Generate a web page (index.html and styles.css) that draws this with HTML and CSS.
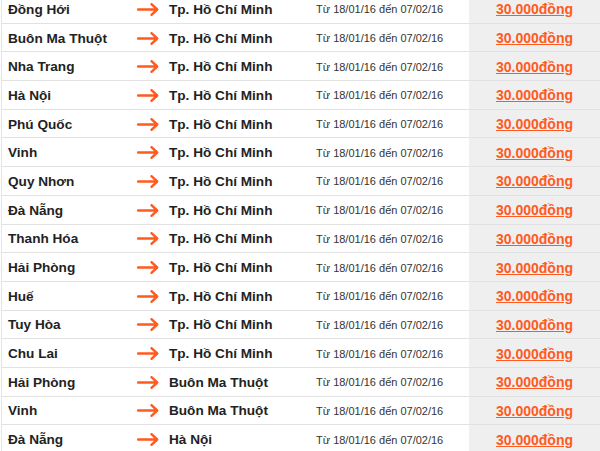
FILE: index.html
```html
<!DOCTYPE html>
<html lang="vi">
<head>
<meta charset="utf-8">
<link rel="stylesheet" href="styles.css">
</head>
<body>
<div class="list">
  <div class="row"><span class="from">Đồng Hới</span><span class="arr"><svg viewBox="0 0 22 13" width="22" height="13"><path d="M1 6.5H20M14.5 1.2L20.2 6.5L14.5 11.8"/></svg></span><span class="to">Tp. Hồ Chí Minh</span><span class="date">Từ 18/01/16 đến 07/02/16</span><span class="price"><a href="#">30.000đồng</a></span></div>
  <div class="row"><span class="from">Buôn Ma Thuột</span><span class="arr"><svg viewBox="0 0 22 13" width="22" height="13"><path d="M1 6.5H20M14.5 1.2L20.2 6.5L14.5 11.8"/></svg></span><span class="to">Tp. Hồ Chí Minh</span><span class="date">Từ 18/01/16 đến 07/02/16</span><span class="price"><a href="#">30.000đồng</a></span></div>
  <div class="row"><span class="from">Nha Trang</span><span class="arr"><svg viewBox="0 0 22 13" width="22" height="13"><path d="M1 6.5H20M14.5 1.2L20.2 6.5L14.5 11.8"/></svg></span><span class="to">Tp. Hồ Chí Minh</span><span class="date">Từ 18/01/16 đến 07/02/16</span><span class="price"><a href="#">30.000đồng</a></span></div>
  <div class="row"><span class="from">Hà Nội</span><span class="arr"><svg viewBox="0 0 22 13" width="22" height="13"><path d="M1 6.5H20M14.5 1.2L20.2 6.5L14.5 11.8"/></svg></span><span class="to">Tp. Hồ Chí Minh</span><span class="date">Từ 18/01/16 đến 07/02/16</span><span class="price"><a href="#">30.000đồng</a></span></div>
  <div class="row"><span class="from">Phú Quốc</span><span class="arr"><svg viewBox="0 0 22 13" width="22" height="13"><path d="M1 6.5H20M14.5 1.2L20.2 6.5L14.5 11.8"/></svg></span><span class="to">Tp. Hồ Chí Minh</span><span class="date">Từ 18/01/16 đến 07/02/16</span><span class="price"><a href="#">30.000đồng</a></span></div>
  <div class="row"><span class="from">Vinh</span><span class="arr"><svg viewBox="0 0 22 13" width="22" height="13"><path d="M1 6.5H20M14.5 1.2L20.2 6.5L14.5 11.8"/></svg></span><span class="to">Tp. Hồ Chí Minh</span><span class="date">Từ 18/01/16 đến 07/02/16</span><span class="price"><a href="#">30.000đồng</a></span></div>
  <div class="row"><span class="from">Quy Nhơn</span><span class="arr"><svg viewBox="0 0 22 13" width="22" height="13"><path d="M1 6.5H20M14.5 1.2L20.2 6.5L14.5 11.8"/></svg></span><span class="to">Tp. Hồ Chí Minh</span><span class="date">Từ 18/01/16 đến 07/02/16</span><span class="price"><a href="#">30.000đồng</a></span></div>
  <div class="row"><span class="from">Đà Nẵng</span><span class="arr"><svg viewBox="0 0 22 13" width="22" height="13"><path d="M1 6.5H20M14.5 1.2L20.2 6.5L14.5 11.8"/></svg></span><span class="to">Tp. Hồ Chí Minh</span><span class="date">Từ 18/01/16 đến 07/02/16</span><span class="price"><a href="#">30.000đồng</a></span></div>
  <div class="row"><span class="from">Thanh Hóa</span><span class="arr"><svg viewBox="0 0 22 13" width="22" height="13"><path d="M1 6.5H20M14.5 1.2L20.2 6.5L14.5 11.8"/></svg></span><span class="to">Tp. Hồ Chí Minh</span><span class="date">Từ 18/01/16 đến 07/02/16</span><span class="price"><a href="#">30.000đồng</a></span></div>
  <div class="row"><span class="from">Hải Phòng</span><span class="arr"><svg viewBox="0 0 22 13" width="22" height="13"><path d="M1 6.5H20M14.5 1.2L20.2 6.5L14.5 11.8"/></svg></span><span class="to">Tp. Hồ Chí Minh</span><span class="date">Từ 18/01/16 đến 07/02/16</span><span class="price"><a href="#">30.000đồng</a></span></div>
  <div class="row"><span class="from">Huế</span><span class="arr"><svg viewBox="0 0 22 13" width="22" height="13"><path d="M1 6.5H20M14.5 1.2L20.2 6.5L14.5 11.8"/></svg></span><span class="to">Tp. Hồ Chí Minh</span><span class="date">Từ 18/01/16 đến 07/02/16</span><span class="price"><a href="#">30.000đồng</a></span></div>
  <div class="row"><span class="from">Tuy Hòa</span><span class="arr"><svg viewBox="0 0 22 13" width="22" height="13"><path d="M1 6.5H20M14.5 1.2L20.2 6.5L14.5 11.8"/></svg></span><span class="to">Tp. Hồ Chí Minh</span><span class="date">Từ 18/01/16 đến 07/02/16</span><span class="price"><a href="#">30.000đồng</a></span></div>
  <div class="row"><span class="from">Chu Lai</span><span class="arr"><svg viewBox="0 0 22 13" width="22" height="13"><path d="M1 6.5H20M14.5 1.2L20.2 6.5L14.5 11.8"/></svg></span><span class="to">Tp. Hồ Chí Minh</span><span class="date">Từ 18/01/16 đến 07/02/16</span><span class="price"><a href="#">30.000đồng</a></span></div>
  <div class="row"><span class="from">Hải Phòng</span><span class="arr"><svg viewBox="0 0 22 13" width="22" height="13"><path d="M1 6.5H20M14.5 1.2L20.2 6.5L14.5 11.8"/></svg></span><span class="to">Buôn Ma Thuột</span><span class="date">Từ 18/01/16 đến 07/02/16</span><span class="price"><a href="#">30.000đồng</a></span></div>
  <div class="row"><span class="from">Vinh</span><span class="arr"><svg viewBox="0 0 22 13" width="22" height="13"><path d="M1 6.5H20M14.5 1.2L20.2 6.5L14.5 11.8"/></svg></span><span class="to">Buôn Ma Thuột</span><span class="date">Từ 18/01/16 đến 07/02/16</span><span class="price"><a href="#">30.000đồng</a></span></div>
  <div class="row"><span class="from">Đà Nẵng</span><span class="arr"><svg viewBox="0 0 22 13" width="22" height="13"><path d="M1 6.5H20M14.5 1.2L20.2 6.5L14.5 11.8"/></svg></span><span class="to">Hà Nội</span><span class="date">Từ 18/01/16 đến 07/02/16</span><span class="price"><a href="#">30.000đồng</a></span></div>
</div>
</body>
</html>
```

FILE: styles.css
```css
html, body {
  margin: 0;
  padding: 0;
  background: #fff;
  overflow: hidden;
}
body {
  font-family: "Liberation Sans", Arial, sans-serif;
  color: #222;
}
.list {
  margin-top: -5px;
  margin-left: 1px;
  border-left: 1px solid #e6e6e6;
}
.row {
  display: flex;
  align-items: stretch;
  height: 28.7px;
  box-sizing: border-box;
  border-bottom: 1px solid #e2e2e2;
}
.row > span {
  display: flex;
  align-items: center;
  padding-top: 1px;
  box-sizing: border-box;
}
.from {
  width: 134px;
  padding-left: 6px;
  font-weight: bold;
  font-size: 13.6px;
  color: #222;
}
.arr {
  width: 33px;
  padding-left: 1px;
}
.arr svg {
  display: block;
  fill: none;
  stroke: #ff5a1f;
  stroke-width: 2.4;
  stroke-linecap: round;
  stroke-linejoin: round;
}
.to {
  width: 136px;
  font-weight: bold;
  font-size: 13.6px;
  color: #222;
}
.date {
  width: 164px;
  padding-left: 11px;
  font-size: 11px;
  color: #333;
}
.price {
  flex: 1;
  justify-content: center;
  background: #efefef;
}
.price a {
  color: #ff5a1f;
  font-weight: bold;
  font-size: 14px;
  text-decoration: underline;
}
```
